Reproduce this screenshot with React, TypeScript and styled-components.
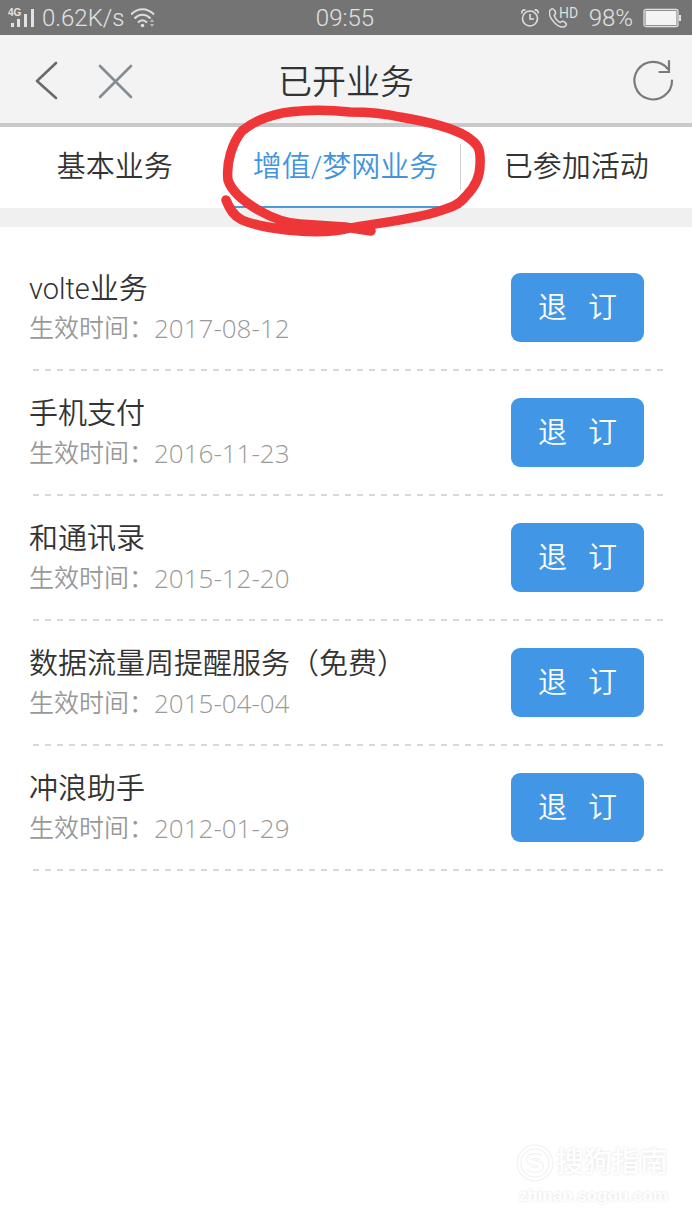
import React from "react";
import styled, { createGlobalStyle } from "styled-components";

const GlobalStyle = createGlobalStyle`
  * { box-sizing: border-box; }
  body {
    margin: 0;
    background: #ffffff;
    color: #333333;
    font-family: Roboto, "Noto Sans CJK SC", sans-serif;
    font-weight: 350;
  }
  button { font: inherit; color: inherit; border: 0; background: none; padding: 0; cursor: pointer; }
  h1, h2, p, ul { margin: 0; padding: 0; font-weight: inherit; }
`;

const Page = styled.div`
  min-height: 100vh;
  display: flex;
  flex-direction: column;
`;

const StatusBar = styled.div`
  height: 35px;
  padding: 0 10px 0 8px;
  display: grid;
  grid-template-columns: 1fr auto 1fr;
  align-items: center;
  background: #747474;
  color: #e2e2e2;
  font-size: 24px;
  font-weight: 300;
  line-height: 34px;
`;

const StatusGroup = styled.div<{ $end?: boolean }>`
  display: flex;
  align-items: center;
  gap: ${(p) => (p.$end ? "10px" : "6px")};
  justify-content: ${(p) => (p.$end ? "flex-end" : "flex-start")};
  svg { display: block; flex: none; }
`;

const Header = styled.header`
  height: 92px;
  padding: 0 18px;
  display: grid;
  grid-template-columns: 1fr auto 1fr;
  align-items: center;
  background: #f3f3f3;
  border-bottom: 4px solid #c9c9c9;
`;

const HeaderSide = styled.div<{ $end?: boolean }>`
  display: flex;
  gap: 36px;
  justify-content: ${(p) => (p.$end ? "flex-end" : "flex-start")};
`;

const IconButton = styled.button`
  display: block;
  width: 42px;
  height: 42px;
  svg { display: block; overflow: visible; }
`;

const Title = styled.h1`
  padding-top: 6px;
  font-size: 34px;
  line-height: 48px;
`;

const Tabs = styled.nav`
  position: relative;
  display: grid;
  grid-template-columns: repeat(3, 1fr);
  height: 100px;
  border-bottom: 19px solid #f0f0f0;
`;

const Tab = styled.button<{ $active?: boolean }>`
  display: flex;
  align-items: center;
  border-bottom: 2px solid ${(p) => (p.$active ? "#4a9ae0" : "transparent")};
  color: ${(p) => (p.$active ? "#4294dd" : "#333333")};
  font-size: 29px;
`;

const TabLabel = styled.span<{ $divided?: boolean }>`
  flex: 1;
  height: 46px;
  line-height: 46px;
  white-space: nowrap;
  border-right: 1px solid ${(p) => (p.$divided ? "#d2d2d2" : "transparent")};
`;

const Scribble = styled.svg`
  position: absolute;
  top: -27px;
  left: 50%;
  margin-left: -130px;
  pointer-events: none;
`;

const List = styled.ul`
  list-style: none;
  padding: 19px 29px 0;
`;

const Row = styled.li`
  height: 125px;
  padding: 0 19px 2px 0;
  display: flex;
  align-items: center;
  justify-content: space-between;
  background: repeating-linear-gradient(to right, transparent 0 4px, #d8d8d8 4px 10px, transparent 10px 12px) bottom / 100% 2px no-repeat;
`;

const Name = styled.h2`
  padding-top: 2px;
  font-size: 29px;
  line-height: 40px;
`;

const Meta = styled.p`
  display: flex;
  font-size: 25px;
  line-height: 40px;
  color: #999999;
`;

const DateText = styled.time`
  font-family: "Open Sans", "Noto Sans", sans-serif;
  font-size: 26px;
  line-height: 38px;
`;

const Unsubscribe = styled.button`
  width: 133px;
  height: 69px;
  flex: none;
  border-radius: 9px;
  background: #4197e6;
  color: #ffffff;
  font-size: 29px;
  line-height: 40px;
  white-space: pre;
`;

const Watermark = styled.footer`
  margin-top: auto;
  padding: 0 24px 22px 0;
  display: flex;
  flex-direction: column;
  align-items: flex-end;
  color: #ffffff;
  text-shadow: 0 0 3px #dddddd;
`;

const Brand = styled.div`
  display: flex;
  align-items: center;
  gap: 2px;
  font-size: 28px;
  line-height: 42px;
  font-weight: 500;
`;

const Site = styled.div`
  font-family: "Liberation Sans", sans-serif;
  font-size: 17px;
  line-height: 24px;
  font-weight: 700;
`;

const services = [
  { name: "volte业务", date: "2017-08-12" },
  { name: "手机支付", date: "2016-11-23" },
  { name: "和通讯录", date: "2015-12-20" },
  { name: "数据流量周提醒服务（免费）", date: "2015-04-04" },
  { name: "冲浪助手", date: "2012-01-29" },
];

const SignalIcon = () => (
  <svg width="28" height="22" viewBox="0 0 28 22" fill="#e2e2e2">
    <text x="0" y="9" fontSize="10" fontWeight="700" fontFamily="Liberation Sans, sans-serif">4G</text>
    <rect x="3" y="16" width="3" height="4" />
    <rect x="9" y="12" width="3" height="8" />
    <rect x="16" y="7" width="3" height="13" />
    <rect x="23" y="2" width="3" height="18" />
  </svg>
);

const WifiIcon = () => (
  <svg width="26" height="22" viewBox="1 0 26 22" fill="none" stroke="#dedede" strokeWidth="2">
    <path d="M1 7.500C8 .5 17 .5 24 7.500M4.500 11.500C9.500 6.500 15.500 6.500 20.500 11.500M8 15.500C11 12.500 14 12.500 17 15.500" />
    <circle cx="12.500" cy="18.500" r="1.800" fill="#dedede" stroke="none" />
    <path d="M20 15l2-3 2 3zM20 17l2 3 2-3z" fill="#bdbdbd" stroke="none" />
  </svg>
);

const AlarmIcon = () => (
  <svg width="18" height="20" viewBox="1 0 18 20" fill="none" stroke="#dedede" strokeWidth="1.600">
    <circle cx="10" cy="10.500" r="7.500" />
    <path d="M10 6v5h4M2 5.500C1.500 3 3 1.500 5.500 2M18 5.500C18.500 3 17 1.500 14.500 2" />
  </svg>
);

const CallIcon = () => (
  <svg width="30" height="24" viewBox="2 0 30 24" fill="none" stroke="#dedede" strokeWidth="1.500">
    <path d="M3 4.500C5 2 6.500 2.500 8 5c1.500 2.500.5 3-.8 4.500 1 3 3 5.500 6 7 1.800-1.500 2.500-2 4.800-.2 2.200 1.800 2 2.700-.3 4.200C12 23.500 0 11.500 3 4.500z" />
    <text x="12" y="12" fontSize="14" stroke="none" fill="#dedede" fontFamily="Roboto, sans-serif" fontWeight="400">HD</text>
  </svg>
);

const BatteryIcon = () => (
  <svg width="39" height="20" viewBox="0 0 39 20">
    <rect x="1" y="1.500" width="34" height="17" rx="2" fill="none" stroke="#e2e2e2" strokeWidth="1.300" />
    <rect x="2.500" y="3" width="31" height="14" fill="#f4f4f4" />
    <path d="M36 7h2v6h-2z" fill="#e2e2e2" />
  </svg>
);

export default function App() {
  return (
    <>
      <GlobalStyle />
      <Page>
        <StatusBar>
          <StatusGroup>
            <SignalIcon />
            <span>0.62K/s</span>
            <WifiIcon />
          </StatusGroup>
          <span>09:55</span>
          <StatusGroup $end>
            <AlarmIcon />
            <CallIcon />
            <span>98%</span>
            <BatteryIcon />
          </StatusGroup>
        </StatusBar>

        <Header>
          <HeaderSide>
            <IconButton aria-label="返回">
              <svg width="42" height="42" viewBox="0 0 42 42" fill="none" stroke="#6a6a6a" strokeWidth="2.600" strokeLinecap="round" strokeLinejoin="round">
                <path d="M38 5L19 23l19 17" />
              </svg>
            </IconButton>
            <IconButton aria-label="关闭">
              <svg width="42" height="42" viewBox="0 0 42 42" fill="none" stroke="#858b92" strokeWidth="2.600" strokeLinecap="round">
                <path d="M4 8l31 31M35 8L4 39" />
              </svg>
            </IconButton>
          </HeaderSide>
          <Title>已开业务</Title>
          <HeaderSide $end>
            <IconButton aria-label="刷新">
              <svg width="42" height="42" viewBox="0 0 42 42" fill="none" stroke="#7a7a7a" strokeWidth="2.200" strokeLinecap="round">
                <path d="M40 22.500A18.800 18.800 0 1 1 36 11" />
                <path d="M37 3v11H27.500" />
              </svg>
            </IconButton>
          </HeaderSide>
        </Header>

        <Tabs>
          <Tab><TabLabel $divided>基本业务</TabLabel></Tab>
          <Tab $active aria-current="page"><TabLabel $divided>增值/梦网业务</TabLabel></Tab>
          <Tab><TabLabel>已参加活动</TabLabel></Tab>
          <Scribble width="280" height="150" viewBox="216 100 280 150" fill="none" stroke="#ee3537" strokeWidth="9.500" strokeLinecap="round" strokeLinejoin="round" aria-hidden="true">
            <path d="M226 200C230 210 234 216 242 220C256 226 271 228 287 230C305 232 331 233 350 228C372 224 408 220 433 213C452 207 459 205 466 196C475 187 480 177 480 165C481 148 478 144 466 136C449 126 424 121 400 117C383 113 366 112 350 112C331 110 314 110 300 111C276 112 255 120 242 131C232 143 226 163 228 180C232 193 246 203 260 211C274 219 286 223 300 224L345 227L371 231" />
          </Scribble>
        </Tabs>

        <List>
          {services.map((s) => (
            <Row key={s.name}>
              <div>
                <Name>{s.name}</Name>
                <Meta>
                  <span>生效时间：</span>
                  <DateText dateTime={s.date}>{s.date}</DateText>
                </Meta>
              </div>
              <Unsubscribe>{"退\u00a0\u00a0\u00a0订"}</Unsubscribe>
            </Row>
          ))}
        </List>

        <Watermark>
          <Brand>
            <svg width="38" height="38" viewBox="0 0 38 38" fill="none">
              <g stroke="#f0f0f0">
                <circle cx="19" cy="19" r="16" strokeWidth="5" />
                <path d="M25 13.500C20 11 13 12 13 15.500C13 20 25 17.500 25 22.500C25 26 17 27 12.500 24" strokeWidth="6" />
              </g>
              <g stroke="#ffffff">
                <circle cx="19" cy="19" r="16" strokeWidth="3" />
                <path d="M25 13.500C20 11 13 12 13 15.500C13 20 25 17.500 25 22.500C25 26 17 27 12.500 24" strokeWidth="4" />
              </g>
            </svg>
            <span>搜狗指南</span>
          </Brand>
          <Site>zhinan.sogou.com</Site>
        </Watermark>
      </Page>
    </>
  );
}
